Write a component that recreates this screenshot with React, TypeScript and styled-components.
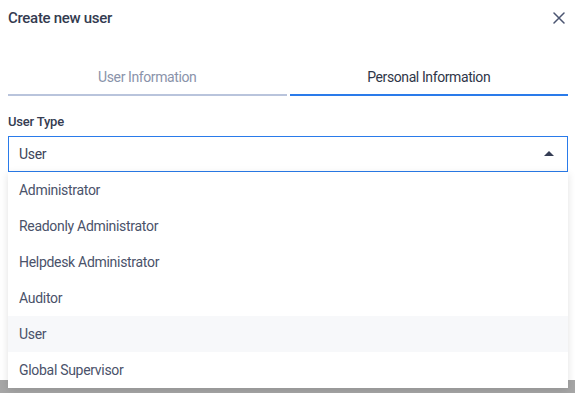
import { useState } from "react";
import styled, { createGlobalStyle } from "styled-components";

const GlobalStyle = createGlobalStyle`
  html, body {
    margin: 0;
    padding: 0;
    background-color: #a6a6a6;
    font-family: Roboto, "Liberation Sans", sans-serif;
  }
`;

const Page = styled.div`
  min-height: 100vh;
  background-color: #a6a6a6;
`;

const Dialog = styled.div`
  position: relative;
  height: 380px;
  background-color: #ffffff;
  padding: 0 7px 0 8px;
  display: flex;
  flex-direction: column;
`;

const Header = styled.div`
  height: 36px;
  display: flex;
  align-items: center;
  justify-content: space-between;
`;

const Title = styled.h3`
  margin: 0;
  font-size: 15px;
  font-weight: 500;
  letter-spacing: -0.3px;
  color: #343b50;
`;

const CloseButton = styled.button`
  border: none;
  background: transparent;
  padding: 0;
  margin-right: 3px;
  width: 12px;
  height: 12px;
  display: flex;
  cursor: pointer;
`;

const Tabs = styled.div`
  margin-top: 24px;
  display: grid;
  grid-template-columns: 1fr 1fr;
  gap: 3px;
`;

const Tab = styled.div<{ active: boolean }>`
  height: 34px;
  display: flex;
  align-items: center;
  justify-content: center;
  font-size: 14px;
  letter-spacing: -0.4px;
  color: ${(p) => (p.active ? "#2f3648" : "#8a93aa")};
  border-bottom: 2px solid ${(p) => (p.active ? "#2a7bea" : "#b9c4dc")};
`;

const Label = styled.div`
  margin-top: 18px;
  margin-bottom: 6px;
  font-size: 13px;
  line-height: 16px;
  font-weight: 500;
  letter-spacing: -0.2px;
  color: #353c51;
`;

const SelectWrap = styled.div`
  position: relative;
`;

const SelectBox = styled.div`
  box-sizing: border-box;
  height: 36px;
  border: 1px solid #2a7bea;
  display: flex;
  align-items: center;
  justify-content: space-between;
  padding: 0 13px 0 10px;
  font-size: 14px;
  letter-spacing: -0.3px;
  color: #3d4459;
`;

const Arrow = styled.span`
  width: 0;
  height: 0;
  border-left: 5px solid transparent;
  border-right: 5px solid transparent;
  border-bottom: 5px solid #353d55;
  margin-top: -1px;
`;

const Menu = styled.ul`
  position: absolute;
  top: 36px;
  left: 0;
  right: 0;
  margin: 0;
  padding: 0;
  list-style: none;
  background-color: #ffffff;
  box-shadow: 0 2px 8px rgba(0, 0, 0, 0.12);
  z-index: 2;
`;

const Option = styled.li<{ selected: boolean }>`
  height: 36px;
  display: flex;
  align-items: center;
  padding-left: 11px;
  font-size: 14px;
  letter-spacing: -0.3px;
  color: #4a526a;
  background-color: ${(p) => (p.selected ? "#f7f8fa" : "#ffffff")};
`;

const options = [
  "Administrator",
  "Readonly Administrator",
  "Helpdesk Administrator",
  "Auditor",
  "User",
  "Global Supervisor",
];

export default function App() {
  const [tab, setTab] = useState(1);
  const [value, setValue] = useState("User");

  return (
    <Page>
      <GlobalStyle />
      <Dialog>
        <Header>
          <Title>Create new user</Title>
          <CloseButton aria-label="Close">
            <svg width="12" height="12" viewBox="0 0 12 12">
              <path
                d="M1 1 L11 11 M11 1 L1 11"
                stroke="#4b5571"
                strokeWidth="1.5"
                strokeLinecap="round"
              />
            </svg>
          </CloseButton>
        </Header>
        <Tabs>
          <Tab active={tab === 0} onClick={() => setTab(0)}>
            User Information
          </Tab>
          <Tab active={tab === 1} onClick={() => setTab(1)}>
            Personal Information
          </Tab>
        </Tabs>
        <Label>User Type</Label>
        <SelectWrap>
          <SelectBox>
            {value}
            <Arrow />
          </SelectBox>
          <Menu>
            {options.map((o) => (
              <Option key={o} selected={o === value} onClick={() => setValue(o)}>
                {o}
              </Option>
            ))}
          </Menu>
        </SelectWrap>
      </Dialog>
    </Page>
  );
}
